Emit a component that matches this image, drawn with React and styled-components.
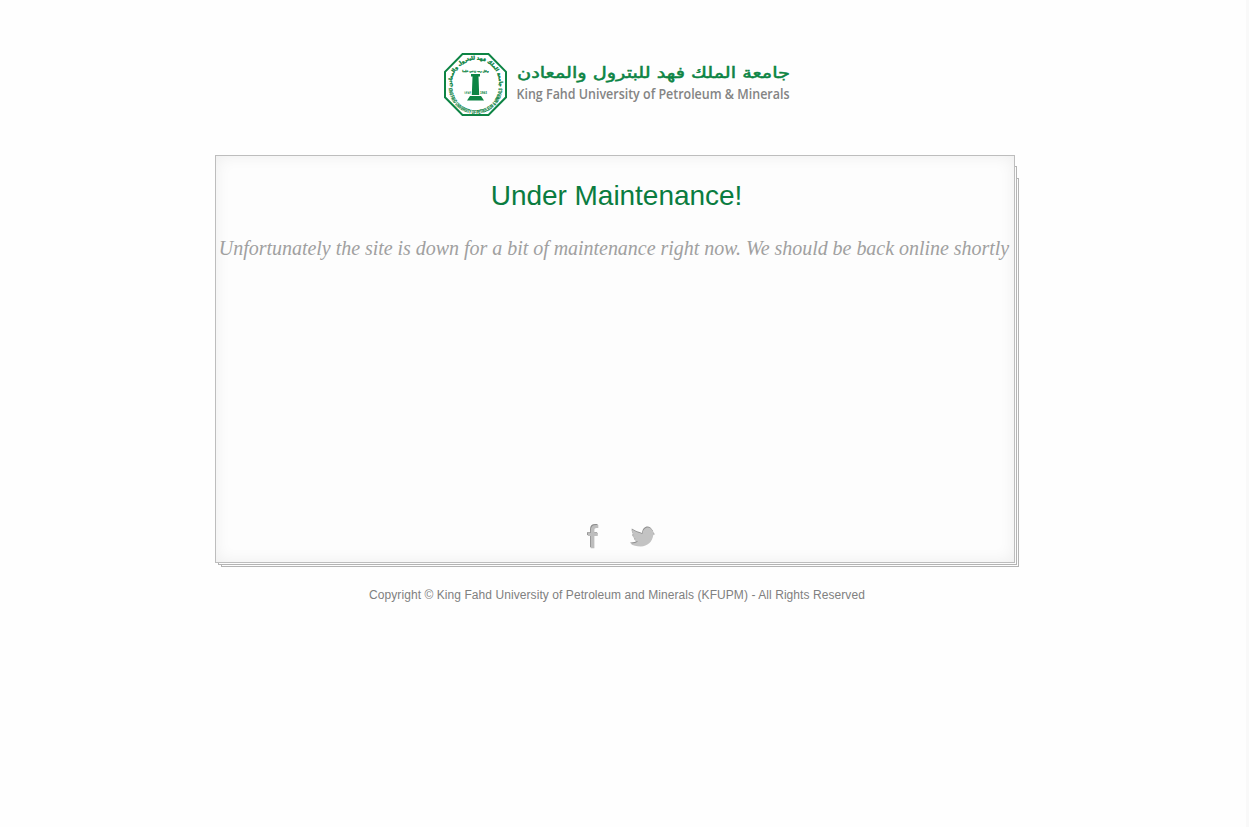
import React from "react";
import styled, { createGlobalStyle } from "styled-components";

const GlobalStyle = createGlobalStyle`
  body {
    margin: 0;
    background: #fefefe;
    font-family: "Liberation Sans", Arial, sans-serif;
  }
`;

const Page = styled.div`
  box-sizing: border-box;
  min-height: 827px;
  border-right: 3px solid #f9f9f9;
  padding: 48px 12px 0 0;
  display: flex;
  flex-direction: column;
  align-items: center;
`;

const Logo = styled.svg`
  display: block;
  width: 360px;
  height: 72px;
`;

const Stack = styled.main`
  position: relative;
  z-index: 0;
  width: 804px;
  height: 412px;
  margin-top: 35px;
`;

const Sheet = styled.div`
  position: absolute;
  z-index: -1;
  box-sizing: border-box;
  left: ${(p) => p.$left}px;
  right: ${(p) => p.$right}px;
  top: ${(p) => p.$top}px;
  bottom: ${(p) => p.$right}px;
  border: 1px solid #b4b4b4;
  background: #fdfdfd;
`;

const Panel = styled.section`
  box-sizing: border-box;
  width: 800px;
  height: 408px;
  border: 1px solid #bdbdbd;
  background: #fdfdfd;
  box-shadow: inset 0 0 16px rgba(0, 0, 0, 0.065);
  display: flex;
  flex-direction: column;
  align-items: center;
`;

const Title = styled.h1`
  margin: 23px 0 0 3px;
  font-size: 28px;
  line-height: 34px;
  font-weight: 400;
  letter-spacing: -0.03px;
  color: #0a7c40;
`;

const Message = styled.p`
  margin: 22px 2px 0 0;
  font-family: Georgia, "Liberation Serif", serif;
  font-style: italic;
  font-size: 20px;
  line-height: 26px;
  letter-spacing: -0.03px;
  white-space: nowrap;
  color: #a0a0a0;
`;

const Social = styled.nav`
  display: flex;
  gap: 28px;
  margin: auto 0 12px 11px;
`;

const SocialIcon = styled.svg`
  display: block;
  width: ${(p) => p.$width}px;
  height: 28px;
`;

const Footer = styled.footer`
  margin-top: 20px;
  font-size: 12px;
  line-height: 16px;
  letter-spacing: 0.07px;
  white-space: nowrap;
  color: #808080;
`;

const green = "#0d8444";

function UniversityLogo() {
  return (
    <Logo viewBox="0 0 360 72" role="img">
      <defs>
        <path id="arcTop" d="M15.3 40 A23.7 23.7 0 1 1 61.7 40" />
        <path id="arcBottom" d="M11.7 39 A26.8 26.8 0 0 0 65.3 39" />
      </defs>
      <path
        d="M25.5 6 H51.5 L69 23.8 V49.3 L51.5 67 H25.5 L8 49.3 V23.8 Z"
        fill="#fff"
        stroke={green}
        strokeWidth="2"
      />
      <g fill={green} fontFamily="'DejaVu Sans', sans-serif" fontWeight="700">
        <text fontSize="4.8" direction="rtl" textAnchor="middle" stroke={green} strokeWidth="0.4">
          <textPath href="#arcTop" startOffset="50%">جامعة الملك فهد للبترول والمعادن</textPath>
        </text>
        <text fontSize="5.2" fontFamily="'Liberation Sans', sans-serif" stroke={green} strokeWidth="0.25">
          <textPath href="#arcBottom" startOffset="1" textLength="81" lengthAdjust="spacingAndGlyphs">
            KING FAHD UNIVERSITY OF PETROLEUM &amp; MINERALS
          </textPath>
        </text>
        <text x="38.5" y="24" fontSize="2.8" direction="rtl" textAnchor="middle" stroke={green} strokeWidth="0.3">
          وقل رب زدني علما
        </text>
        <text x="27" y="46" fontSize="4" textLength="7" lengthAdjust="spacingAndGlyphs">١٣٨٣</text>
        <text x="43" y="46" fontSize="4" textLength="7" lengthAdjust="spacingAndGlyphs">1963</text>
      </g>
      <path
        d="M34 26 H43 V28.5 H34 Z M35.5 28.5 H41.5 L42.2 47 H34.8 Z M33 48 H44 L47 52.5 H30 Z"
        fill={green}
      />
      <text
        x="353" y="30" direction="rtl" textAnchor="start" fontSize="15.5" fontWeight="400"
        fontFamily="'DejaVu Sans', sans-serif" fill={green} stroke={green} strokeWidth="0.5"
        textLength="273" lengthAdjust="spacingAndGlyphs"
      >
        جامعة الملك فهد للبترول والمعادن
      </text>
      <text
        x="79.5" y="51" fontSize="14" fontWeight="600" fontFamily="'Open Sans', 'Noto Sans', sans-serif"
        fill="#848484" textLength="273" lengthAdjust="spacingAndGlyphs"
      >
        King Fahd University of Petroleum &amp; Minerals
      </text>
    </Logo>
  );
}

const facebookPath =
  "M5 25.3 V13 H2 V10.2 H5 V7.5 C5 3.8 6.8 2 10.2 2 H12.5 V5.2 H10.8 C9.2 5.2 8.6 6 8.6 7.6 V10.2 H12.2 L11.9 13 H8.6 V25.3 Z";
const twitterPath =
  "M1 20.5 C4 20.7 6.5 20 8.7 18.6 C6.8 18.6 5.6 17.8 4.8 16.4 L6.3 16 C4.3 15.3 3.3 14 3.2 12.2 L4.8 12.4 C3 11 2.4 9.2 2.8 6.6 C6.2 9.2 9.6 9.8 13 11 C13.4 7 15.6 4.6 18.6 4.6 C20.4 4.6 21.8 5.5 22.6 7 L24 8.8 L23.8 10 L25.6 11.5 L23.8 12.4 C23 19 18 23.5 11.5 23.5 C7 23.5 3.5 22.7 1 20.5 Z";

export default function App() {
  return (
    <>
      <GlobalStyle />
      <Page>
        <UniversityLogo />
        <Stack>
          <Sheet $left={6} $right={0} $top={23} />
          <Sheet $left={3} $right={2} $top={11} />
          <Panel>
            <Title>Under Maintenance!</Title>
            <Message>
              Unfortunately the site is down for a bit of maintenance right now. We should be back online shortly
            </Message>
            <Social>
              <SocialIcon $width={16} viewBox="0 0 16 28">
                <path d={facebookPath} fill="#8e8e8e" />
                <path d={facebookPath} fill="#bdbdbd" transform="translate(.8 .9)" />
              </SocialIcon>
              <SocialIcon $width={28} viewBox="0 0 28 28">
                <path d={twitterPath} fill="#8e8e8e" />
                <path d={twitterPath} fill="#c3c3c3" transform="translate(.4 .9)" />
              </SocialIcon>
            </Social>
          </Panel>
        </Stack>
        <Footer>Copyright © King Fahd University of Petroleum and Minerals (KFUPM) - All Rights Reserved</Footer>
      </Page>
    </>
  );
}
